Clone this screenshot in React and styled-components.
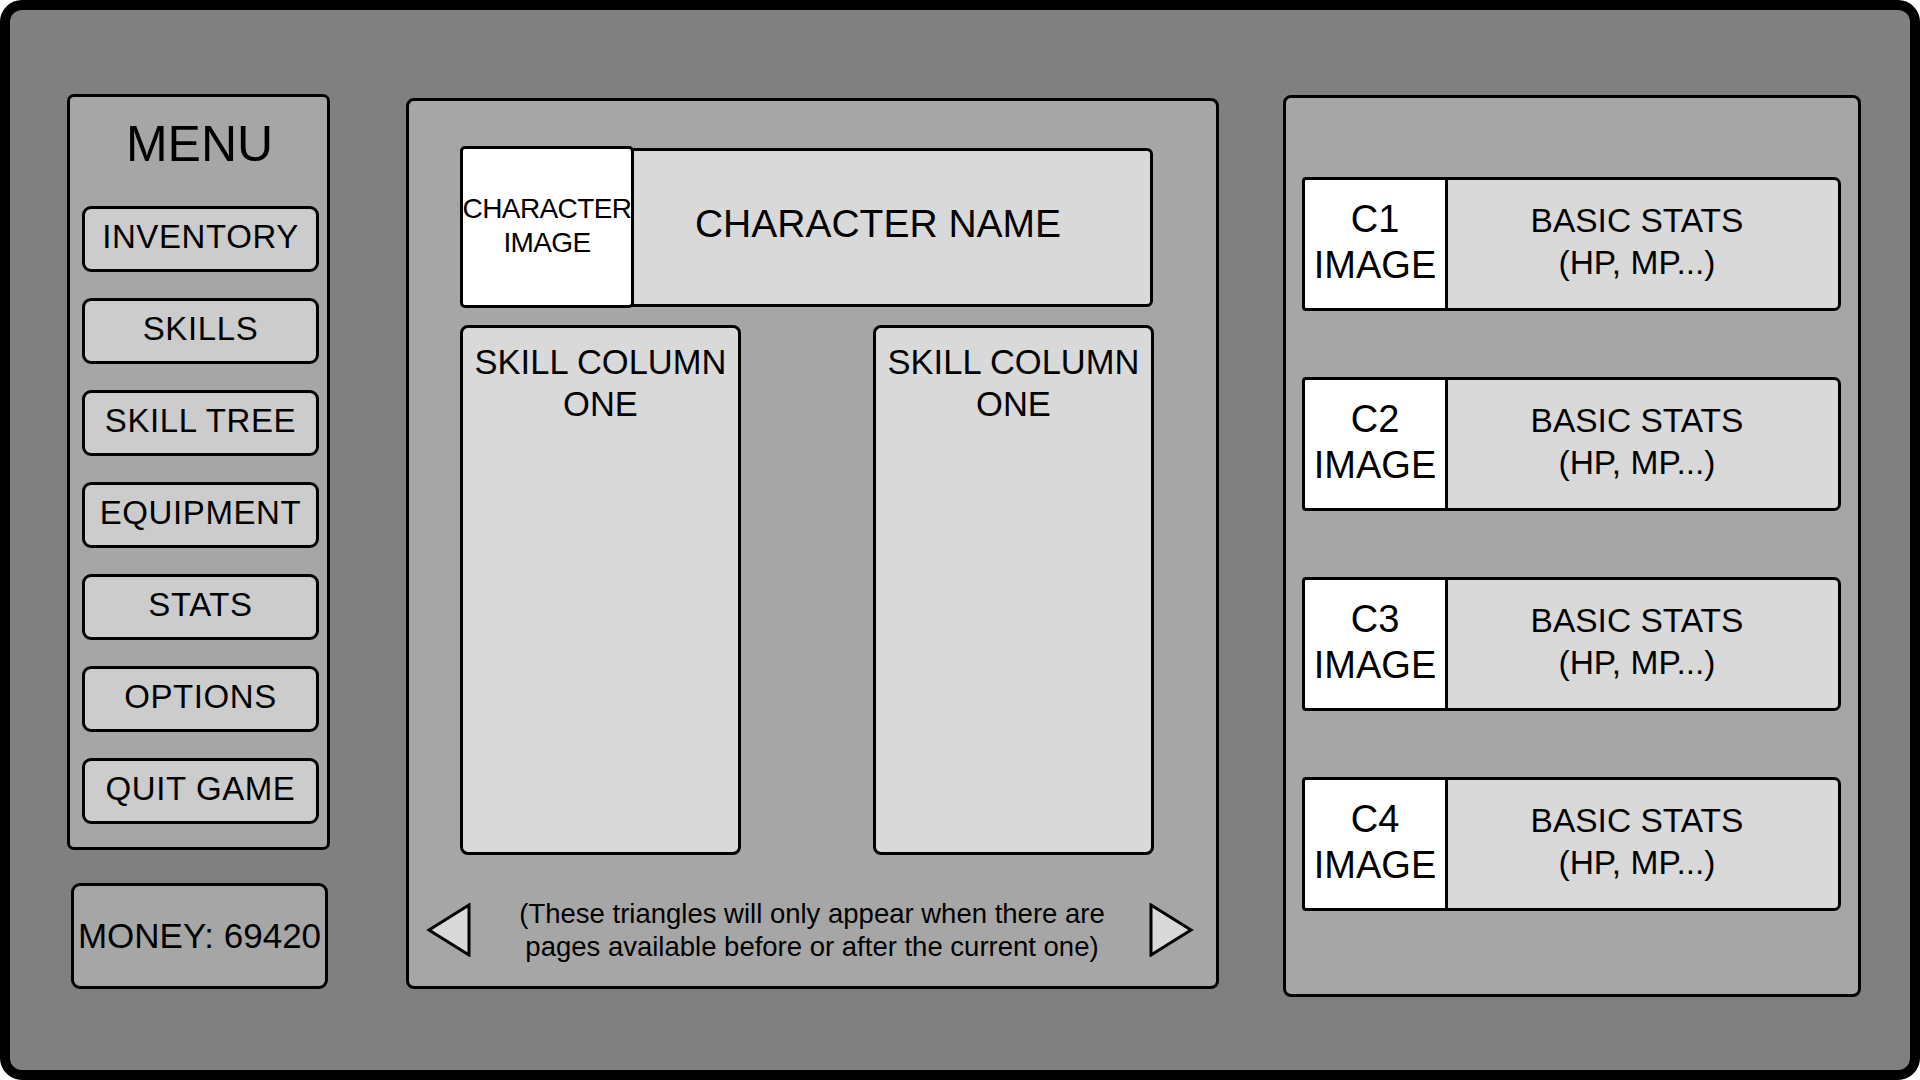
import React from "react";
import styled, { createGlobalStyle } from "styled-components";

const GlobalStyle = createGlobalStyle`
  html, body {
    margin: 0;
    padding: 0;
    overflow: hidden;
    background: #ffffff;
  }
  body {
    font-family: "Liberation Sans", Arial, Helvetica, sans-serif;
    color: #000;
  }
  * {
    box-sizing: border-box;
  }
`;

const menuItems = [
  "INVENTORY",
  "SKILLS",
  "SKILL TREE",
  "EQUIPMENT",
  "STATS",
  "OPTIONS",
  "QUIT GAME",
];

const party = ["C1", "C2", "C3", "C4"];

const Triangle = ({ dir }) => (
  <NavArrow width="46" height="54" viewBox="0 0 46 54">
    {dir === "left" ? (
      <polygon points="3,27 43,2 43,52" />
    ) : (
      <polygon points="3,2 43,27 3,52" />
    )}
  </NavArrow>
);

const App = () => {
  return (
    <>
      <GlobalStyle />
      <Frame>
        <LeftColumn>
          <MenuPanel>
            <MenuTitle>MENU</MenuTitle>
            <MenuList>
              {menuItems.map((item) => (
                <MenuButton key={item}>{item}</MenuButton>
              ))}
            </MenuList>
          </MenuPanel>
          <MoneyBox>MONEY: 69420</MoneyBox>
        </LeftColumn>

        <CenterPanel>
          <CharacterSection>
            <CharacterHeader>
              <CharacterImage>
                CHARACTER
                <br />
                IMAGE
              </CharacterImage>
              <CharacterName>CHARACTER NAME</CharacterName>
            </CharacterHeader>
            <SkillColumns>
              <SkillColumn>
                SKILL COLUMN
                <br />
                ONE
              </SkillColumn>
              <SkillColumn>
                SKILL COLUMN
                <br />
                ONE
              </SkillColumn>
            </SkillColumns>
          </CharacterSection>
          <PageNav>
            <Triangle dir="left" />
            <NavNote>
              (These triangles will only appear when there are
              <br />
              pages available before or after the current one)
            </NavNote>
            <Triangle dir="right" />
          </PageNav>
        </CenterPanel>

        <PartyPanel>
          {party.map((c) => (
            <PartyCard key={c}>
              <CardImage>
                {c}
                <br />
                IMAGE
              </CardImage>
              <CardStats>
                BASIC STATS
                <br />
                (HP, MP...)
              </CardStats>
            </PartyCard>
          ))}
        </PartyPanel>
      </Frame>
    </>
  );
};

const Frame = styled.div`
  width: 100vw;
  height: 100vh;
  background: #808080;
  border: 10px solid #000;
  border-radius: 22px;
  display: flex;
  align-items: flex-start;
  padding-left: 57px;
`;

/* left column */

const LeftColumn = styled.div`
  display: flex;
  flex-direction: column;
  width: 263px;
  margin-top: 84px;
`;

const MenuPanel = styled.div`
  height: 756px;
  background: #a6a6a6;
  border: 3px solid #000;
  border-radius: 7px;
  padding: 22px 8px 0 12px;
  display: flex;
  flex-direction: column;
`;

const MenuTitle = styled.div`
  font-size: 50px;
  line-height: 50px;
  text-align: center;
  margin-bottom: 37px;
  padding-right: 2px;
`;

const MenuList = styled.div`
  display: flex;
  flex-direction: column;
  gap: 26px;
`;

const MenuButton = styled.div`
  width: 237px;
  height: 66px;
  background: #cccccc;
  border: 3px solid #000;
  border-radius: 9px;
  display: flex;
  align-items: center;
  justify-content: center;
  padding-bottom: 4px;
  font-size: 33px;
  letter-spacing: 0.6px;
  cursor: pointer;
`;

const MoneyBox = styled.div`
  width: 257px;
  height: 106px;
  margin: 33px 0 0 4px;
  background: #a6a6a6;
  border: 3px solid #000;
  border-radius: 9px;
  display: flex;
  align-items: center;
  justify-content: center;
  font-size: 35px;
  white-space: nowrap;
`;

/* center panel */

const CenterPanel = styled.div`
  width: 813px;
  height: 891px;
  margin: 88px 0 0 76px;
  background: #a6a6a6;
  border: 3px solid #000;
  border-radius: 8px;
  padding-top: 45px;
  display: flex;
  flex-direction: column;
`;

const CharacterSection = styled.div`
  padding-left: 51px;
`;

const CharacterHeader = styled.div`
  display: flex;
  align-items: center;
  width: 693px;
`;

const CharacterImage = styled.div`
  width: 174px;
  height: 162px;
  background: #ffffff;
  border: 3px solid #000;
  border-radius: 5px;
  display: flex;
  align-items: center;
  justify-content: center;
  text-align: center;
  font-size: 28px;
  line-height: 34px;
  letter-spacing: -0.6px;
  padding-bottom: 2px;
  position: relative;
  z-index: 1;
`;

const CharacterName = styled.div`
  flex: 1;
  height: 159px;
  margin-left: -3px;
  background: #d9d9d9;
  border: 3px solid #000;
  border-radius: 0 6px 6px 0;
  display: flex;
  align-items: center;
  justify-content: center;
  padding: 0 28px 6px 0;
  font-size: 39px;
  white-space: nowrap;
`;

const SkillColumns = styled.div`
  display: flex;
  justify-content: space-between;
  width: 694px;
  margin-top: 17px;
`;

const SkillColumn = styled.div`
  width: 281px;
  height: 530px;
  background: #d9d9d9;
  border: 3px solid #000;
  border-radius: 8px;
  padding-top: 13px;
  text-align: center;
  font-size: 34.5px;
  line-height: 42px;
`;

const PageNav = styled.div`
  display: flex;
  align-items: center;
  justify-content: space-between;
  height: 67px;
  margin-top: 41px;
  padding: 0 22px 0 17px;
`;

const NavArrow = styled.svg`
  flex-shrink: 0;
  polygon {
    fill: #d9d9d9;
    stroke: #000;
    stroke-width: 3;
    stroke-linejoin: miter;
  }
`;

const NavNote = styled.div`
  text-align: center;
  font-size: 27.5px;
  line-height: 33px;
  white-space: nowrap;
  padding-left: 4px;
`;

/* party panel */

const PartyPanel = styled.div`
  width: 578px;
  height: 902px;
  margin: 85px 0 0 64px;
  background: #a6a6a6;
  border: 3px solid #000;
  border-radius: 8px;
  padding: 79px 0 0 16px;
  display: flex;
  flex-direction: column;
  gap: 66px;
`;

const PartyCard = styled.div`
  display: flex;
  width: 539px;
  height: 134px;
`;

const CardImage = styled.div`
  width: 146px;
  height: 100%;
  background: #ffffff;
  border: 3px solid #000;
  border-radius: 4px 0 0 4px;
  display: flex;
  align-items: center;
  justify-content: center;
  text-align: center;
  font-size: 38px;
  line-height: 46px;
  padding-bottom: 4px;
`;

const CardStats = styled.div`
  flex: 1;
  height: 100%;
  background: #d9d9d9;
  border: 3px solid #000;
  border-left: none;
  border-radius: 0 7px 7px 0;
  display: flex;
  align-items: center;
  justify-content: center;
  text-align: center;
  font-size: 33.5px;
  line-height: 42px;
  padding: 0 12px 4px 0;
`;

export default App;
